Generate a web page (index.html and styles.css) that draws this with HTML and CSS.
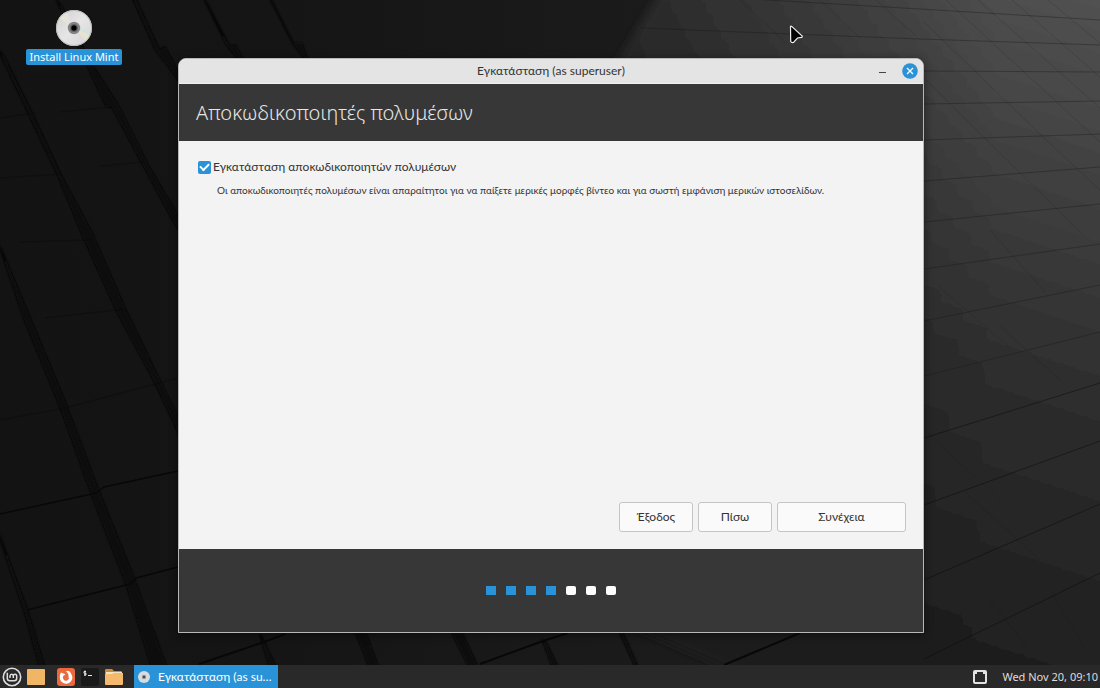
FILE: index.html
```html
<!DOCTYPE html>
<html lang="el">
<head>
<meta charset="utf-8">
<title>Εγκατάσταση</title>
<link rel="stylesheet" href="styles.css">
</head>
<body class="desktop">
<svg class="wallpaper" viewBox="0 0 1100 688" preserveAspectRatio="none" aria-hidden="true">
  <defs>
    <linearGradient id="base" x1="0" y1="0" x2="1" y2="0">
      <stop offset="0" stop-color="#131313"/><stop offset=".25" stop-color="#151515"/><stop offset=".6" stop-color="#1b1b1b"/><stop offset="1" stop-color="#202020"/>
    </linearGradient>
    <linearGradient id="slab" gradientUnits="userSpaceOnUse" x1="1090" y1="0" x2="880" y2="640">
      <stop offset="0" stop-color="#515151"/><stop offset=".25" stop-color="#414141"/><stop offset=".55" stop-color="#2e2e2e"/><stop offset="1" stop-color="#1e1e1e"/>
    </linearGradient>
    <linearGradient id="shade" gradientUnits="userSpaceOnUse" x1="600" y1="0" x2="1000" y2="0">
      <stop offset="0" stop-color="#181818" stop-opacity=".65"/><stop offset="1" stop-color="#181818" stop-opacity="0"/>
    </linearGradient>
    <filter id="soft"><feGaussianBlur stdDeviation="1"/></filter>
    <filter id="edge"><feGaussianBlur stdDeviation="4"/></filter>
  </defs>
  <rect width="1100" height="688" fill="url(#base)"/>
  <g filter="url(#edge)">
    <path d="M668 -20L616 64V620L800 700H1120V-20Z" fill="url(#slab)"/>
    <path d="M668 -20L616 64V620L800 700H1120V-20Z" fill="url(#shade)"/>
  </g>
  <g fill="#070707" filter="url(#soft)">
    <path d="M-4 46L5 57L34 116L62 176L92 232L124 305L160 380L182 424V444L174 424L152 378L117 313L84 240L58 177L29 116Z"/>
    <path d="M54 -4L62 6L92 64L118 104L148 164L182 222V236L171 218L143 166L112 108L106 107L86 64Z"/>
    <path d="M131 -4H135L160 50L165 46L182 78V86L172 72L155 50Z"/>
    <path d="M202 -4L206 0L230 46L236 45L243 59H237L226 45Z"/>
    <path d="M268 -4L272 0L294 43L302 43L308 59H304L292 43Z"/>
    <path d="M-4 238L3 252L64 398L98 488L134 577L168 670H152L126 585L95 505L60 408L24 320Z"/>
    <path d="M-4 528L2 540L28 610L46 670H40L23 609Z"/>
    <path d="M261 634L278 670H270L259 634ZM354 630H365L380 670H370ZM450 630H461L480 670H470ZM541 638L547 643L560 670H553ZM618 630H622L640 670H636Z"/>
  </g>
  <g fill="none" stroke="#080808" stroke-width="1.4">
    <path d="M0 514L96 493L104 487L178 471M27 610L130 584L136 578L178 567"/>
    <path d="M199 664L264 642L285 634M480 664L543 641L568 633M724 665L800 633" stroke-width="2"/>
    <path d="M0 420L65 408L178 378M0 118L35 113M0 178L62 174M60 112L112 107M100 166L145 162M20 242L90 240M45 318L124 309" opacity=".28"/>
  </g>
  <g fill="none" stroke="#161616" stroke-width="1">
    <path d="M700 -4L920 9L1100 20M640 28L920 39L1100 45M924 71L1100 72M924 104L1100 101M924 140L1100 134M924 181L1100 167M924 222L1100 204M924 269L1100 244M924 321L1100 285M924 376L1100 332" opacity=".36"/>
    <path d="M924 438L1100 383M924 505L1100 441M924 580L1100 504M924 659L1100 573" stroke="#090909" opacity=".45"/>
    <path d="M924 22L1044 138L1100 190M924 78L1084 236M946 0L1100 142M978 0L1100 108M1012 0L1100 77M1048 0L1100 43M990 230L1045 292M938 286L1010 348M1000 326L1060 380M924 430L1000 500M965 492L1040 560M1050 590L1086 650M990 600L1030 650M740 0L786 43M820 0L860 38M876 0L916 36" opacity=".15"/>
  </g>
</svg>

<a class="launcher" href="#installer">
  <svg width="38" height="38" viewBox="0 0 38 38" aria-hidden="true">
    <defs><linearGradient id="disc" x1="0" y1="0" x2="1" y2="1"><stop stop-color="#cfcfcf"/><stop offset=".5" stop-color="#e6e6e6"/><stop offset="1" stop-color="#d4d4d4"/></linearGradient></defs>
    <circle cx="19" cy="19" r="18" fill="url(#disc)"/>
    <path d="M19 19L4 9A18 18 0 0 1 9 4Z" fill="#e3e6d6"/><path d="M19 19L9 4A18 18 0 0 1 12 3Z" fill="#eadde3"/>
    <path d="M19 19L35 26A18 18 0 0 1 31 32Z" fill="#e8e3cc"/><path d="M19 19L36 22A18 18 0 0 1 35 26Z" fill="#d0e3e1"/><path d="M19 19L31 32A18 18 0 0 1 28 34Z" fill="#e1d8e6"/>
    <circle cx="19" cy="19" r="17.5" fill="none" stroke="#bbb"/>
    <circle cx="19" cy="19" r="6.2" fill="#858585"/><circle cx="19" cy="19" r="4" fill="#646464"/><circle cx="19" cy="19" r="2.7" fill="#000"/>
  </svg>
  <span class="launcher-label">Install Linux Mint</span>
</a>

<main class="workspace">
  <section class="window" id="installer">
    <header class="titlebar">
      <span class="titlebar-text">Εγκατάσταση (as superuser)</span>
      <div class="titlebar-controls">
        <button class="control" type="button" aria-label="Ελαχιστοποίηση"><svg width="8" height="16" viewBox="0 0 8 16"><path d="M0 9.5H7" stroke="#444" fill="none"/></svg></button>
        <button class="control" type="button" aria-label="Κλείσιμο"><svg width="16" height="16" viewBox="0 0 16 16"><circle cx="8" cy="8" r="7.8" fill="#2a92d6"/><path d="M5 5L11 11M11 5L5 11" stroke="#fff" stroke-width="1.4"/></svg></button>
      </div>
    </header>
    <div class="banner"><h1 class="heading">Αποκωδικοποιητές πολυμέσων</h1></div>
    <form class="content">
      <div class="option">
        <input class="tick" type="checkbox" id="codecs" checked aria-describedby="codecs-note">
        <label class="option-label" for="codecs">Εγκατάσταση αποκωδικοποιητών πολυμέσων</label>
      </div>
      <p class="note" id="codecs-note">Οι αποκωδικοποιητές πολυμέσων είναι απαραίτητοι για να παίξετε μερικές μορφές βίντεο και για σωστή εμφάνιση μερικών ιστοσελίδων.</p>
      <div class="actions">
        <button class="button" type="button">Έξοδος</button>
        <button class="button" type="button">Πίσω</button>
        <button class="button button-wide" type="button">Συνέχεια</button>
      </div>
    </form>
    <footer class="steps">
      <span class="step step-done"></span><span class="step step-done"></span><span class="step step-done"></span><span class="step step-done"></span><span class="step"></span><span class="step"></span><span class="step"></span>
    </footer>
  </section>
</main>

<nav class="panel">
  <div class="panel-apps">
    <button class="app" type="button" aria-label="Menu"><svg width="20" height="20" viewBox="0 0 20 20" fill="none" stroke="#dedede"><circle cx="10" cy="10" r="8.7" stroke-width="1.6"/><path d="M5.3 5.8V11.2Q5.3 13.7 7.8 13.7H12.2Q14.7 13.7 14.7 11.2V9Q14.7 7.2 13 7.2T11.3 9V11M11.3 9Q11.3 7.2 9.7 7.2T8 9V11" stroke-width="1.5"/></svg></button>
    <button class="app" type="button" aria-label="Show desktop"><svg width="20" height="20" viewBox="0 0 20 20"><rect x="1" y="2" width="18" height="16" rx="1" fill="#f1b566"/></svg></button>
  </div>
  <div class="panel-apps panel-launchers">
    <button class="app" type="button" aria-label="Firefox"><svg width="20" height="20" viewBox="0 0 20 20"><rect x="1" y="1" width="18" height="18" rx="3" fill="#ec683d"/><path d="M5 5.2Q3.8 7.6 3.8 10.4A6.3 6.3 0 1 0 16.3 9.4Q15.8 6.2 13 4H10Q12.8 6.8 12.6 9.4A3 3 0 1 1 7.6 8.6L9.4 7.8Q8 6 6.6 6.3Q5.4 6 5 5.2Z" fill="#fff"/></svg></button>
    <button class="app" type="button" aria-label="Terminal"><svg width="20" height="20" viewBox="0 0 20 20"><rect x="1" y="1" width="18" height="18" rx="2" fill="#191919"/><path d="M6 4.5H4V6.2H6V8H4M5 3.5V9M8 8.5H12" fill="none" stroke="#e6e6e6"/></svg></button>
    <button class="app" type="button" aria-label="Files"><svg width="20" height="20" viewBox="0 0 20 20"><path d="M2 2H8L10 4H17Q18 4 18 6V8H1V3Q1 2 2 2Z" fill="#c9893c"/><rect x="2" y="5" width="16" height="3" fill="#f4e2c4"/><path d="M1 7H8L10 6H19V17Q19 18 18 18H2Q1 18 1 17Z" fill="#f3b96c"/></svg></button>
  </div>
  <button class="task" type="button">
    <svg width="14" height="14" viewBox="0 0 14 14" aria-hidden="true"><circle cx="7" cy="7" r="6" fill="#d6dce0"/><circle cx="7" cy="7" r="2.2" fill="#8d9296"/><circle cx="7" cy="7" r="1" fill="#333"/></svg>
    <span class="task-text">Εγκατάσταση (as su…</span>
  </button>
  <div class="tray">
    <svg width="16" height="16" viewBox="0 0 16 16" role="img" aria-label="Network"><path fill-rule="evenodd" d="M3 1H13Q15 1 15 3V13Q15 15 13 15H3Q1 15 1 13V3Q1 1 3 1ZM3 5V13H13V5H11V3H5V5Z" fill="#e2e2e2"/></svg>
    <time class="clock">Wed Nov 20, 09:10</time>
  </div>
</nav>

<svg class="pointer" width="18" height="22" viewBox="0 0 18 22" aria-hidden="true"><path d="M2.5 2.5Q2.8 1.8 3.7 2.4L14.2 12Q14.6 13 13.6 13.4L9.5 14L5.5 18.5Q3.5 19 2.7 17.5Z" fill="#000" stroke="#eee" stroke-width="1.2"/></svg>
</body>
</html>
```
FILE: styles.css
```css
* { box-sizing: border-box; }

.desktop {
  margin: 0;
  min-height: 100vh;
  display: flex;
  flex-direction: column;
  position: relative;
  background: #151515;
  font-family: Lato, "Noto Sans", sans-serif;
  font-size: 12px;
  line-height: 16px;
  color: #333;
}

button { font: inherit; color: inherit; }
svg { display: block; flex: none; }

.wallpaper {
  position: absolute;
  inset: 0;
  width: 100%;
  height: 100%;
}

.launcher {
  position: absolute;
  left: 26px;
  top: 9px;
  display: flex;
  flex-direction: column;
  align-items: center;
  gap: 2px;
  text-decoration: none;
}
.launcher-label {
  padding: 0 2px;
  min-width: 96px;
  text-align: center;
  border-radius: 2px;
  background: #2a92d6;
  color: #fff;
  font-family: "Noto Sans", sans-serif;
  font-size: 11px;
}

.workspace {
  flex: 1;
  display: flex;
  padding: 58px 176px 32px 178px;
}
.window {
  position: relative;
  flex: 1;
  min-width: 0;
  display: flex;
  flex-direction: column;
  border: 1px solid #b8b8b8;
  border-radius: 8px 8px 0 0;
  background: #f3f3f3;
  box-shadow: 0 2px 10px rgba(0, 0, 0, .45);
  overflow: hidden;
}

.titlebar {
  display: grid;
  grid-template-columns: 1fr auto 1fr;
  align-items: center;
  height: 25px;
  background: #e4e4e4;
  border-bottom: 1px solid #f0f0f0;
}
.titlebar-text { grid-column: 2; }
.titlebar-controls {
  display: flex;
  justify-content: flex-end;
  gap: 15px;
  padding-right: 5px;
}
.control {
  padding: 0;
  border: 0;
  background: none;
}

.banner {
  display: flex;
  align-items: center;
  height: 57px;
  padding: 0 17px;
  background: #373737;
}
.heading {
  margin: 0;
  font-family: "Noto Sans", sans-serif;
  font-size: 20px;
  line-height: 28px;
  font-weight: 300;
  color: #e6e6e6;
}

.content {
  flex: 1;
  display: flex;
  flex-direction: column;
  padding: 18px 17px 17px;
}
.option {
  display: flex;
  align-items: center;
  gap: 2px;
  padding-left: 2px;
}
.tick {
  appearance: none;
  margin: 0;
  width: 13px;
  height: 13px;
  border-radius: 2px;
  background: #2a92d6;
  display: grid;
  place-items: center;
}
.tick:checked::before {
  content: "";
  width: 7px;
  height: 4px;
  margin-bottom: 3px;
  border: solid #fff;
  border-width: 0 0 2px 2px;
  transform: rotate(-45deg);
}
.note {
  margin: 7px 0 0;
  padding-left: 21px;
  font-size: 10px;
}
.actions {
  display: flex;
  justify-content: flex-end;
  gap: 5px;
  margin-top: auto;
}
.button {
  min-width: 74px;
  height: 30px;
  padding: 0 8px;
  border: 1px solid #c5c5c5;
  border-radius: 3px;
  background: #fafafa;
}
.button-wide { min-width: 129px; }

.steps {
  display: flex;
  align-items: center;
  justify-content: center;
  gap: 10px;
  height: 83px;
  background: #373737;
}
.step {
  width: 10px;
  height: 9px;
  border-radius: 2px;
  background: #fff;
}
.step-done {
  border-radius: 0;
  background: #2a92d6;
}

.panel {
  position: relative;
  display: flex;
  align-items: center;
  height: 23px;
  padding: 0 2px;
  background: #292929;
  color: #ddd;
}
.panel-apps { display: flex; gap: 4px; }
.panel-launchers { margin: 0 10px; }
.app {
  padding: 0;
  border: 0;
  background: none;
}
.task {
  display: flex;
  align-items: center;
  gap: 7px;
  width: 144px;
  height: 23px;
  padding: 0 4px 0 3px;
  border: 0;
  background: #2a92d6;
  color: #fff;
}
.task-text { white-space: nowrap; }
.tray {
  display: flex;
  align-items: center;
  gap: 14px;
  margin-left: auto;
}
.clock {
  font-family: "Noto Sans", sans-serif;
  font-size: 11px;
}

.pointer {
  position: absolute;
  left: 788px;
  top: 24px;
}
```
